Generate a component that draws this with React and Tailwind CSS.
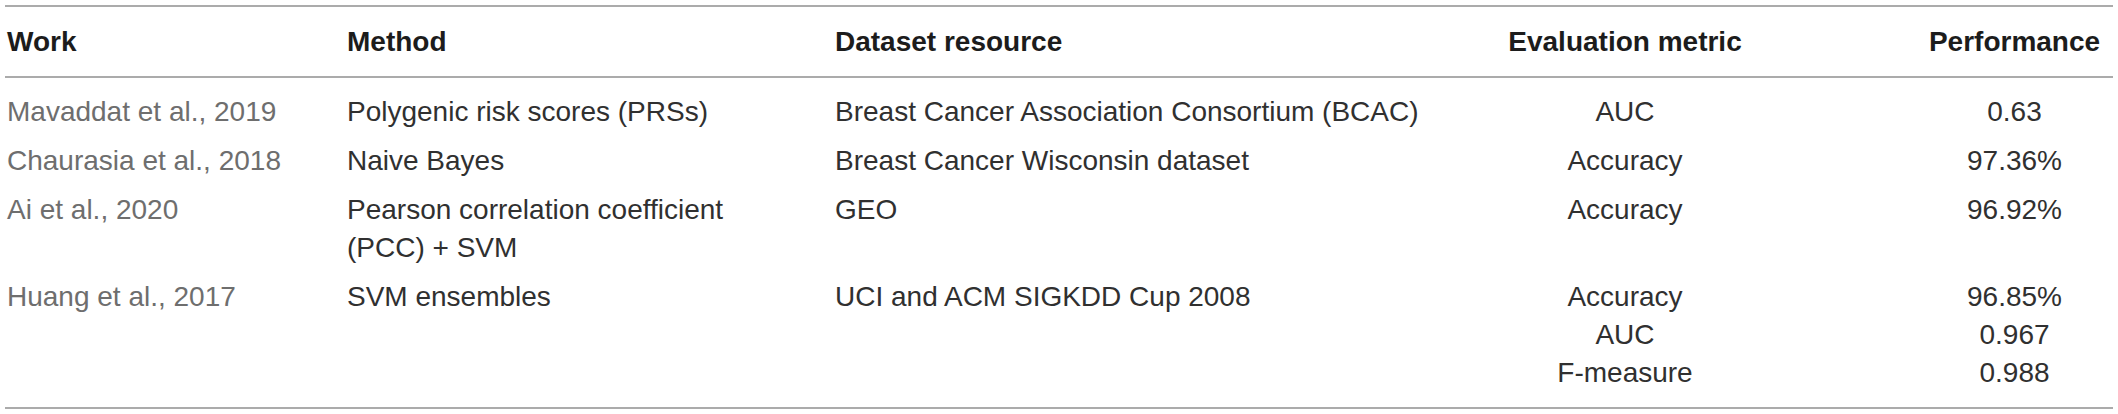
import React from 'react'

const rows = [
  {
    work: 'Mavaddat et al., 2019',
    method: 'Polygenic risk scores (PRSs)',
    dataset: 'Breast Cancer Association Consortium (BCAC)',
    metric: ['AUC'],
    perf: ['0.63'],
  },
  {
    work: 'Chaurasia et al., 2018',
    method: 'Naive Bayes',
    dataset: 'Breast Cancer Wisconsin dataset',
    metric: ['Accuracy'],
    perf: ['97.36%'],
  },
  {
    work: 'Ai et al., 2020',
    method: 'Pearson correlation coefficient (PCC) + SVM',
    dataset: 'GEO',
    metric: ['Accuracy'],
    perf: ['96.92%'],
  },
  {
    work: 'Huang et al., 2017',
    method: 'SVM ensembles',
    dataset: 'UCI and ACM SIGKDD Cup 2008',
    metric: ['Accuracy', 'AUC', 'F-measure'],
    perf: ['96.85%', '0.967', '0.988'],
  },
]

const Row = ({ row, first, last }) => {
  // first row sits a bit further from the header rule, last one from the bottom rule
  const pad = first ? 'pt-[15px] pb-[5px]' : last ? 'pt-[6px] pb-[15px]' : 'pt-[6px] pb-[5px]'
  return (
    <tr className="align-top">
      <td className={`${pad} pl-[2px] text-[#6e6e6e]`}>{row.work}</td>
      <td className={`${pad} pl-[2px] pr-[60px]`}>{row.method}</td>
      <td className={`${pad} pl-[2px]`}>{row.dataset}</td>
      <td className={`${pad} text-center`}>
        {row.metric.map((m) => (
          <div key={m}>{m}</div>
        ))}
      </td>
      <td className={`${pad} pl-[126px] text-center`}>
        {row.perf.map((p) => (
          <div key={p}>{p}</div>
        ))}
      </td>
    </tr>
  )
}

export default function App() {
  return (
    <div className="w-[2118px] h-[414px] bg-white pt-[5px] px-[5px] font-['Liberation_Sans',Arial,sans-serif] text-[28px] leading-[38px] text-[#303030]">
      <table className="w-[2108px] table-fixed border-collapse">
        <colgroup>
          <col className="w-[340px]" />
          <col className="w-[488px]" />
          <col className="w-[627px]" />
          <col className="w-[330px]" />
          <col className="w-[323px]" />
        </colgroup>
        <thead>
          <tr className="border-y-2 border-[#ababab] font-bold text-[#1c1c1c] align-top">
            <th className="pt-[16px] pb-[15px] pl-[2px] text-left font-bold">Work</th>
            <th className="pt-[16px] pb-[15px] pl-[2px] text-left font-bold">Method</th>
            <th className="pt-[16px] pb-[15px] pl-[2px] text-left font-bold">Dataset resource</th>
            <th className="pt-[16px] pb-[15px] text-center font-bold">Evaluation metric</th>
            <th className="pt-[16px] pb-[15px] pl-[126px] text-center font-bold">Performance</th>
          </tr>
        </thead>
        <tbody className="border-b-2 border-[#ababab]">
          {rows.map((row, i) => (
            <Row key={row.work} row={row} first={i === 0} last={i === rows.length - 1} />
          ))}
        </tbody>
      </table>
    </div>
  )
}
